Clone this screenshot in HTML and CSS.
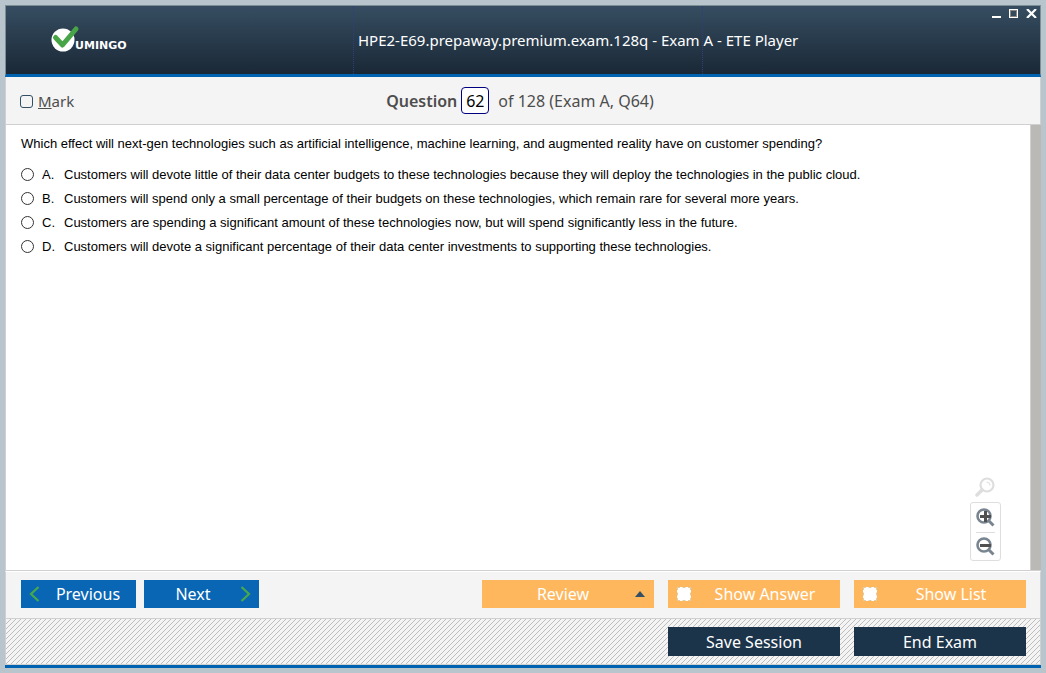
FILE: index.html
```html
<!DOCTYPE html>
<html lang="en">
<head>
<meta charset="utf-8">
<title>ETE Player</title>
<link rel="stylesheet" href="styles.css">
</head>
<body>
<div class="window">
  <header class="titlebar">
    <svg class="logo" width="84" height="30" viewBox="0 0 84 30" role="img" aria-label="Vumingo">
      <circle cx="12" cy="15" r="11.5" fill="#fff"/>
      <path d="M4.500 12.500L11.500 20L25 4" fill="none" stroke="#47a447" stroke-width="5" stroke-linecap="round" stroke-linejoin="round"/>
      <text class="logo-text" x="24" y="24">UMINGO</text>
    </svg>
    <h1 class="title">HPE2-E69.prepaway.premium.exam.128q - Exam A - ETE Player</h1>
    <div class="window-controls">
      <button type="button" class="control" aria-label="Minimize"><svg width="9" height="9" viewBox="0 0 9 9" shape-rendering="crispEdges"><rect y="7" width="9" height="2" fill="#fff"/></svg></button>
      <button type="button" class="control" aria-label="Maximize"><svg width="9" height="9" viewBox="0 0 9 9" shape-rendering="crispEdges"><rect x=".5" y=".5" width="8" height="8" fill="none" stroke="#fff"/><rect x="1.500" y="1.500" width="6" height="6" fill="none" stroke="#8a8680"/></svg></button>
      <button type="button" class="control" aria-label="Close"><svg width="11" height="9" viewBox="0 0 11 9"><path d="M1 0L10 9M10 0L1 9" stroke="#fff" stroke-width="2.200"/></svg></button>
    </div>
  </header>
  <div class="question-bar">
    <label class="mark"><input type="checkbox" class="mark-box"><span><u>M</u>ark</span></label>
    <div class="position">
      <label class="position-label" for="number">Question</label>
      <input class="number" id="number" type="text" value="62">
      <span>of 128 (Exam A, Q64)</span>
    </div>
  </div>
  <main class="content">
    <div class="question">
      <p class="prompt">Which effect will next-gen technologies such as artificial intelligence, machine learning, and augmented reality have on customer spending?</p>
      <label class="option"><input type="radio" name="answer" class="radio"><span class="letter">A.</span><span>Customers will devote little of their data center budgets to these technologies because they will deploy the technologies in the public cloud.</span></label>
      <label class="option"><input type="radio" name="answer" class="radio"><span class="letter">B.</span><span>Customers will spend only a small percentage of their budgets on these technologies, which remain rare for several more years.</span></label>
      <label class="option"><input type="radio" name="answer" class="radio"><span class="letter">C.</span><span>Customers are spending a significant amount of these technologies now, but will spend significantly less in the future.</span></label>
      <label class="option"><input type="radio" name="answer" class="radio"><span class="letter">D.</span><span>Customers will devote a significant percentage of their data center investments to supporting these technologies.</span></label>
    </div>
    <div class="zoom">
      <svg width="20" height="20" viewBox="0 0 20 20" fill="none" stroke="#dedede" stroke-linecap="round"><circle cx="12" cy="8" r="6.500" stroke-width="2.200"/><path d="M7 13L2 18" stroke-width="3.500"/><path d="M12 5Q14.500 5.500 15 8" stroke-width="1.200"/></svg>
      <div class="zoom-box">
        <button type="button" class="zoom-button" aria-label="Zoom in"><svg width="19" height="19" viewBox="0 0 19 19" fill="none"><circle cx="8" cy="8" r="6.500" stroke="#788590" stroke-width="2.600"/><path d="M12.500 12.500L17.500 17.500" stroke="#788590" stroke-width="3"/><path d="M9.500 3V14M4 8.500H15" stroke="#505050" stroke-width="3"/></svg></button>
        <button type="button" class="zoom-button" aria-label="Zoom out"><svg width="19" height="19" viewBox="0 0 19 19" fill="none"><circle cx="8" cy="8" r="6.500" stroke="#788590" stroke-width="2.600"/><path d="M12.500 12.500L17.500 17.500" stroke="#788590" stroke-width="3"/><path d="M4 8.500H15" stroke="#505050" stroke-width="3"/></svg></button>
      </div>
    </div>
    <div class="scrollbar"></div>
  </main>
  <div class="toolbar">
    <button type="button" class="button nav previous"><svg width="11" height="16" viewBox="0 0 11 16"><path d="M9.500 1L2 8L9.500 15" fill="none" stroke="#47a84c" stroke-width="2.200"/></svg><span>Previous</span></button>
    <button type="button" class="button nav next"><span>Next</span><svg width="11" height="16" viewBox="0 0 11 16"><path d="M1.500 1L9 8L1.500 15" fill="none" stroke="#47a84c" stroke-width="2.200"/></svg></button>
    <button type="button" class="button orange review"><span>Review</span><svg width="10" height="6" viewBox="0 0 10 6"><path d="M0 6L5 0L10 6Z" fill="#344f63"/></svg></button>
    <label class="button orange check"><input type="checkbox" class="toggle"><span>Show Answer</span></label>
    <label class="button orange check"><input type="checkbox" class="toggle"><span>Show List</span></label>
  </div>
  <footer class="footer">
    <button type="button" class="button dark">Save Session</button>
    <button type="button" class="button dark">End Exam</button>
  </footer>
</div>
</body>
</html>
```
FILE: styles.css
```css
* { box-sizing: border-box; }
body {
  margin: 0;
  padding: 5px;
  height: 100vh;
  background: #b9c5cc;
  font-family: "Noto Sans", sans-serif;
  color: #4d4d4d;
}
button, input { font: inherit; margin: 0; }
button { border: 0; padding: 0; background: none; }
svg { display: block; flex: none; }
.window {
  display: flex;
  flex-direction: column;
  height: calc(100vh - 10px);
  border-bottom: 3px solid #0063b1;
  background: #f4f4f4;
}
.titlebar {
  display: grid;
  grid-template-columns: 347px 349px 1fr;
  height: 72px;
  flex: none;
  align-items: center;
  border: 1px solid #7e8e95;
  border-bottom: 3px solid #0063b1;
  background: linear-gradient(#364d61, #1a2836);
}
.logo { margin-left: 45px; }
.logo-text { font: 700 11px "DejaVu Sans", sans-serif; fill: #fff; }
.title {
  margin: 0;
  padding-left: 4px;
  height: 68px;
  line-height: 68px;
  border-left: 1px dotted #303f78;
  color: #fff;
  font-size: 15px;
  font-weight: 400;
  white-space: nowrap;
}
.window-controls {
  display: flex;
  gap: 8px;
  align-self: stretch;
  align-items: flex-start;
  justify-content: flex-end;
  padding: 3px 3px 0 0;
  border-left: 1px dotted #303f78;
}
.question-bar {
  display: grid;
  grid-template-columns: 1fr auto 1fr;
  align-items: center;
  height: 48px;
  flex: none;
  padding: 0 14px;
  border: 1px solid #d0d0d0;
  border-top: 0;
  font-size: 16px;
}
.mark { display: flex; align-items: center; gap: 5px; padding-top: 1px; font-size: 15px; }
.mark-box, .radio, .toggle { appearance: none; flex: none; }
.mark-box {
  width: 13px;
  height: 13px;
  border: 1px solid #344f63;
  border-radius: 3px;
}
.position { display: flex; align-items: center; gap: 4px; padding-right: 6px; }
.position-label { font-weight: 600; }
.number {
  width: 28px;
  height: 27px;
  margin-right: 5px;
  padding: 0;
  border: 1px solid #000080;
  border-radius: 4px;
  background: #fff;
  color: #000;
  text-align: center;
}
.content {
  flex: 1;
  display: flex;
  border-left: 1px solid #d0d0d0;
  border-bottom: 1px solid #d0d0d0;
  background: #fff;
  color: #000;
  font: 13px/24px "Liberation Sans", Arial, sans-serif;
}
.question { flex: 1; padding: 7px 0 0 15px; }
.prompt { margin: 0 0 7px; }
.option { display: flex; align-items: flex-start; }
.radio {
  width: 13px;
  height: 13px;
  margin-top: 5px;
  border: 1px solid #333;
  border-radius: 50%;
  background: #fff;
}
.letter { width: 22px; margin-left: 8px; }
.zoom {
  display: flex;
  flex-direction: column;
  align-items: flex-start;
  align-self: flex-end;
  gap: 5px;
  margin: 0 29px 9px 0;
}
.zoom > svg { margin-left: 5px; }
.zoom-box {
  width: 31px;
  padding: 0 5px;
  border: 1px solid #dedede;
  border-radius: 3px;
}
.zoom-button { display: flex; align-items: center; height: 29px; width: 19px; }
.zoom-button + .zoom-button { height: 28px; border-top: 1px solid #dedede; }
.scrollbar { width: 11px; background: #bbb9b5; border-left: 1px solid #d0d0d0; }
.toolbar {
  display: flex;
  gap: 14px;
  align-items: flex-start;
  height: 48px;
  flex: none;
  padding: 8px 14px 0 15px;
  border: 1px solid #d0d0d0;
  border-top: 1px solid #fff;
}
.button {
  display: flex;
  align-items: center;
  justify-content: center;
  height: 28px;
  color: #fff;
  font-size: 16px;
}
.button span { flex: 1; text-align: center; }
.nav { width: 115px; padding: 0 8px; background: #0966b4; }
.previous { padding-right: 0; }
.next { margin-left: -6px; padding-left: 2px; }
.orange { width: 172px; padding: 0 9px; background: #ffb75e; }
.review { margin-left: auto; }
.check { padding-right: 1px; }
.toggle { width: 14px; height: 14px; background: #fff; border: 1px dashed #e0cda8; }
.footer {
  display: flex;
  justify-content: flex-end;
  align-items: flex-start;
  gap: 14px;
  height: 46px;
  flex: none;
  padding: 8px 14px 0 0;
  border: 1px solid #d0d0d0;
  border-top: 0;
  background: #f4f4f4 url("data:image/svg+xml,%3Csvg xmlns='http://www.w3.org/2000/svg' width='5' height='5' shape-rendering='crispEdges'%3E%3Cpath fill='%23bdbdbd' d='M4 0h1v1h-1zM3 1h1v1h-1zM2 2h1v1h-1zM1 3h1v1h-1zM0 4h1v1h-1z'/%3E%3C/svg%3E");
}
.dark { width: 172px; height: 29px; background: #1b344a; }
```
